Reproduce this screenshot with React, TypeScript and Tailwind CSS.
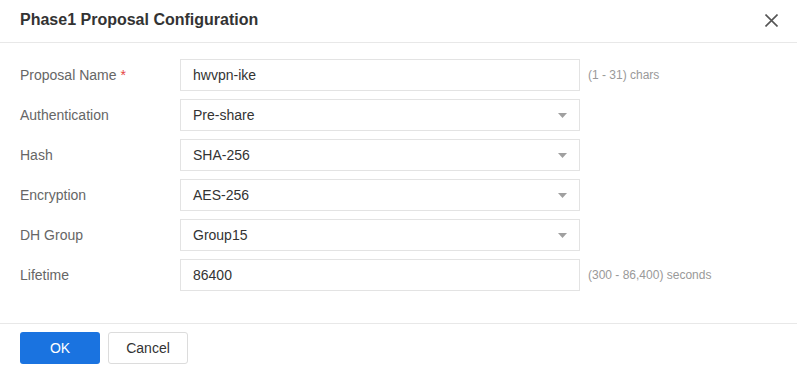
import React from 'react'

type Field = {
  label: string
  value: string
  required?: boolean
  select?: boolean
  hint?: string
}

const FIELDS: Field[] = [
  { label: 'Proposal Name', value: 'hwvpn-ike', required: true, hint: '(1 - 31) chars' },
  { label: 'Authentication', value: 'Pre-share', select: true },
  { label: 'Hash', value: 'SHA-256', select: true },
  { label: 'Encryption', value: 'AES-256', select: true },
  { label: 'DH Group', value: 'Group15', select: true },
  { label: 'Lifetime', value: '86400', hint: '(300 - 86,400) seconds' },
]

function FieldRow({ field }: { field: Field }) {
  return (
    <div className="flex items-center h-8">
      <label className="w-[160px] text-sm text-[#666]">
        {field.label}
        {field.required && <span className="text-[#e54545]"> *</span>}
      </label>
      <div className="relative w-[400px] h-8 border border-[#e3e3e3] bg-white flex items-center pl-3 text-sm text-[#333]">
        {field.value}
        {field.select && (
          <svg className="absolute right-[12px] top-[13px]" width="9" height="5" viewBox="0 0 9 5">
            <path d="M0 0 L9 0 L4.5 5 Z" fill="#a0a0a0" />
          </svg>
        )}
      </div>
      {field.hint && <span className="ml-2 text-xs text-[#999]">{field.hint}</span>}
    </div>
  )
}

export default function App() {
  return (
    <div className="w-[797px] h-[385px] bg-white font-['Liberation_Sans',Arial,sans-serif] flex flex-col">
      {/* Header */}
      <div className="h-[43px] border-b border-[#e8e8e8] flex items-center justify-between pl-5 pr-[19px]">
        <h2 className="text-base font-bold text-[#333] pb-[2px]">Phase1 Proposal Configuration</h2>
        <svg width="13" height="13" viewBox="0 0 13 13" className="mb-[1px]">
          <path d="M0.5 0.5 L12.5 12.5 M12.5 0.5 L0.5 12.5" stroke="#555" strokeWidth="1.6" />
        </svg>
      </div>

      {/* Body */}
      <div className="flex flex-col gap-2 pl-5 pt-4 pb-8">
        {FIELDS.map(f => (
          <FieldRow key={f.label} field={f} />
        ))}
      </div>

      {/* Footer */}
      <div className="border-t border-[#e8e8e8] flex items-center gap-2 pl-5 pt-2">
        <button className="w-20 h-8 rounded-[3px] bg-[#1a73e0] text-white text-sm">OK</button>
        <button className="w-20 h-8 rounded-[3px] border border-[#dcdcdc] bg-white text-[#333] text-sm">Cancel</button>
      </div>
    </div>
  )
}
